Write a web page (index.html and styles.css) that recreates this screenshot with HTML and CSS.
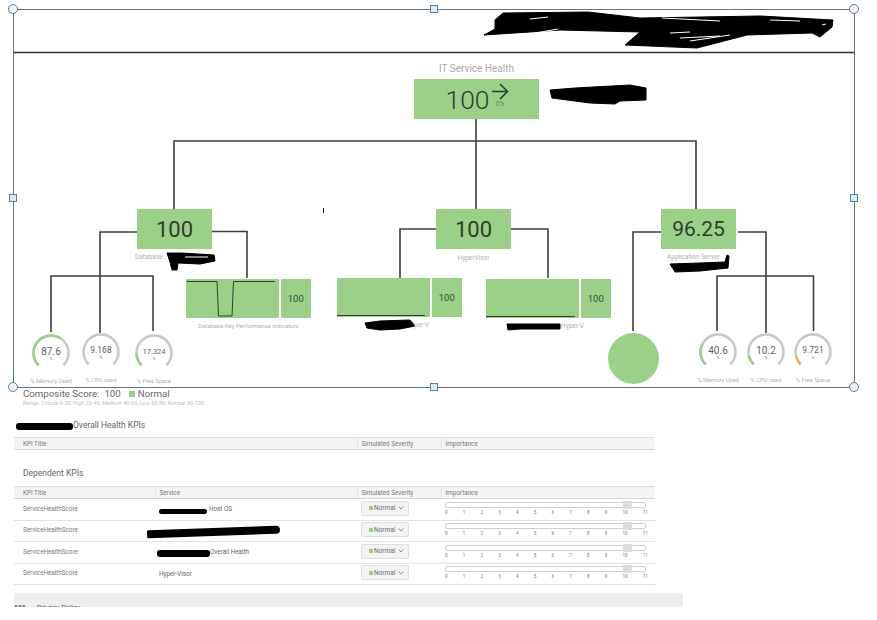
FILE: index.html
```html
<!DOCTYPE html>
<html lang="en">
<head>
<meta charset="utf-8">
<title>IT Service Health</title>
<link rel="stylesheet" href="styles.css">
</head>
<body>
<section class="diagram">
  <svg class="wires" width="877" height="388" viewBox="0 0 877 388">
    <path class="frame" d="M13.5 9.5H854.5V387.5H13.5Z"/>
    <path class="rule" d="M14 52.5H854"/>
    <path class="wire" d="M174 209V141H696V209M476 119V209"/>
    <path class="wire" d="M137 232H100V333M211 231.500H247V278M51 332V276H153V331"/>
    <path class="wire" d="M436 229H400V278M511 229H548V278"/>
    <path class="wire" d="M661 232H633V331M738 232H766V333M717 331V276H813.500V331"/>
    <path class="tick" d="M323.500 208V213"/>
    <g class="scribble">
      <path d="M484 35L495 29 495 20 503 13 588 12 640 18 760 16 833 20 832 27 820 37 812 33 747 35 697 48 625 45 640 32 560 30Z"/>
      <path d="M550 90L575 88 630 85 646 88 646 100 620 101 615 104 590 103 552 98Z"/>
      <path d="M167 253H182L214 255 215 261 200 264 178 263 177 270 172 270 170 262Z"/>
      <path d="M670 264L700 263 725 262 727 255 729 256 728 268 700 271 675 272Z"/>
      <path d="M365 323L380 321 410 320 415 326 400 329 380 330 367 328Z"/>
      <path d="M507 324H560V329H520L508 330Z"/>
    </g>
    <g class="scratch">
      <path d="M530 19L548 17M535 33L558 29M662 18L720 21M770 20L800 21M670 33L690 32M680 38L720 36M690 41L730 35M822 25L826 24"/>
      <path d="M185 257L208 257"/>
    </g>
  </svg>

  <span class="handle corner hc-tl"></span>
  <span class="handle corner hc-tr"></span>
  <span class="handle corner hc-bl"></span>
  <span class="handle corner hc-br"></span>
  <span class="handle square hs-t"></span>
  <span class="handle square hs-l"></span>
  <span class="handle square hs-r"></span>
  <span class="handle square hs-b"></span>

  <div class="root-title">IT Service Health</div>
  <div class="node root">
    <span class="root-value">100</span>
    <span class="trend">
      <svg class="trend-arrow" width="17" height="17" viewBox="0 0 17 17"><path d="M0 8.500H15M8 1L15.500 8.500 8 16"/></svg>
      <span class="trend-pct">0%</span>
    </span>
  </div>

  <div class="node kpi kpi-db">100</div>
  <div class="node kpi kpi-hv">100</div>
  <div class="node kpi kpi-app">96.25</div>
  <div class="caption cap-db">Database</div>
  <div class="caption cap-hv">HyperVisor</div>
  <div class="caption cap-app">Application Server</div>

  <div class="spark spark-db">
    <svg class="spark-plot" width="93" height="39" viewBox="0 0 93 39"><path d="M1 2.500H31L32.500 37H46L47.500 2.500H89"/></svg>
    <span class="spark-value">100</span>
  </div>
  <div class="spark spark-hv1">
    <svg class="spark-plot" width="93" height="39" viewBox="0 0 93 39"><path d="M0 37.500H88"/></svg>
    <span class="spark-value">100</span>
  </div>
  <div class="spark spark-hv2">
    <svg class="spark-plot" width="93" height="39" viewBox="0 0 93 39"><path d="M0 37.500H89"/></svg>
    <span class="spark-value">100</span>
  </div>
  <div class="caption cap-skpi">Database Key Performance indicators</div>
  <div class="caption cap-s1">per-V</div>
  <div class="caption cap-s2">Hyper-V</div>

  <div class="dot"></div>

  <div class="gauge g-1">
    <svg class="dial" width="40" height="40" viewBox="0 0 40 40"><path class="track" d="M7.600 32.400A17.500 17.500 0 1 1 32.400 32.400"/><path class="fill" pathLength="100" stroke-dasharray="62 100" d="M7.600 32.400A17.500 17.500 0 1 1 32.400 32.400"/></svg>
    <span class="g-val big">87.6</span><span class="g-unit">%</span>
    <span class="g-label">% Memory Used</span>
  </div>
  <div class="gauge g-2">
    <svg class="dial" width="40" height="40" viewBox="0 0 40 40"><path class="track" d="M7.600 32.400A17.500 17.500 0 1 1 32.400 32.400"/></svg>
    <span class="g-val">9.168</span><span class="g-unit">%</span>
    <span class="g-label">% CPU used</span>
  </div>
  <div class="gauge g-3">
    <svg class="dial" width="40" height="40" viewBox="0 0 40 40"><path class="track" d="M7.600 32.400A17.500 17.500 0 1 1 32.400 32.400"/><path class="fill" pathLength="100" stroke-dasharray="16 100" d="M7.600 32.400A17.500 17.500 0 1 1 32.400 32.400"/></svg>
    <span class="g-val small">17.324</span><span class="g-unit">%</span>
    <span class="g-label">% Free Space</span>
  </div>
  <div class="gauge g-4">
    <svg class="dial" width="40" height="40" viewBox="0 0 40 40"><path class="track" d="M7.600 32.400A17.500 17.500 0 1 1 32.400 32.400"/><path class="fill" pathLength="100" stroke-dasharray="27 100" d="M7.600 32.400A17.500 17.500 0 1 1 32.400 32.400"/></svg>
    <span class="g-val big">40.6</span><span class="g-unit">%</span>
    <span class="g-label">% Memory Used</span>
  </div>
  <div class="gauge g-5">
    <svg class="dial" width="40" height="40" viewBox="0 0 40 40"><path class="track" d="M7.600 32.400A17.500 17.500 0 1 1 32.400 32.400"/><path class="fill" pathLength="100" stroke-dasharray="12 100" d="M7.600 32.400A17.500 17.500 0 1 1 32.400 32.400"/></svg>
    <span class="g-val big">10.2</span><span class="g-unit">%</span>
    <span class="g-label">% CPU used</span>
  </div>
  <div class="gauge g-6">
    <svg class="dial" width="40" height="40" viewBox="0 0 40 40"><path class="track" d="M7.600 32.400A17.500 17.500 0 1 1 32.400 32.400"/><path class="fill warn" pathLength="100" stroke-dasharray="11 100" d="M7.600 32.400A17.500 17.500 0 1 1 32.400 32.400"/></svg>
    <span class="g-val">9.721</span><span class="g-unit">%</span>
    <span class="g-label">% Free Space</span>
  </div>
</section>

<section class="details">
  <div class="composite">
    <span>Composite Score:</span><span class="score">100</span><span class="swatch"></span><span>Normal</span>
  </div>
  <div class="range">Range: Critical 0-20, High 20-40, Medium 40-60, Low 60-80, Normal 80-100</div>

  <h2 class="section-title overall"><span class="blot blot-overall"></span>Overall Health KPIs</h2>
  <table class="kpis">
    <thead>
      <tr><th class="c-title">KPI Title</th><th class="c-service c-blank"></th><th class="c-sev">Simulated Severity</th><th class="c-imp">Importance</th></tr>
    </thead>
  </table>

  <h2 class="section-title dependent">Dependent KPIs</h2>
  <table class="kpis">
    <thead>
      <tr><th class="c-title">KPI Title</th><th class="c-service">Service</th><th class="c-sev">Simulated Severity</th><th class="c-imp">Importance</th></tr>
    </thead>
    <tbody>
      <tr>
        <td class="kpi-name">ServiceHealthScore</td>
        <td class="svc"><span class="blot blot-a"></span><span class="svc-a">Host OS</span></td>
        <td><button class="sev"><span class="sev-dot"></span>Normal<svg class="chev" width="6" height="4" viewBox="0 0 6 4"><path d="M.5.5L3 3 5.500.5"/></svg></button></td>
        <td>
          <div class="slider"><span class="thumb"></span></div>
          <div class="ticks"><span>0</span><span>1</span><span>2</span><span>3</span><span>4</span><span>5</span><span>6</span><span>7</span><span>8</span><span>9</span><span>10</span><span>11</span></div>
        </td>
      </tr>
      <tr>
        <td class="kpi-name">ServiceHealthScore</td>
        <td class="svc"><span class="blot blot-b"></span></td>
        <td><button class="sev"><span class="sev-dot"></span>Normal<svg class="chev" width="6" height="4" viewBox="0 0 6 4"><path d="M.5.5L3 3 5.500.5"/></svg></button></td>
        <td>
          <div class="slider"><span class="thumb"></span></div>
          <div class="ticks"><span>0</span><span>1</span><span>2</span><span>3</span><span>4</span><span>5</span><span>6</span><span>7</span><span>8</span><span>9</span><span>10</span><span>11</span></div>
        </td>
      </tr>
      <tr>
        <td class="kpi-name">ServiceHealthScore</td>
        <td class="svc"><span class="blot blot-c"></span><span class="svc-c">Overall Health</span></td>
        <td><button class="sev"><span class="sev-dot"></span>Normal<svg class="chev" width="6" height="4" viewBox="0 0 6 4"><path d="M.5.5L3 3 5.500.5"/></svg></button></td>
        <td>
          <div class="slider"><span class="thumb"></span></div>
          <div class="ticks"><span>0</span><span>1</span><span>2</span><span>3</span><span>4</span><span>5</span><span>6</span><span>7</span><span>8</span><span>9</span><span>10</span><span>11</span></div>
        </td>
      </tr>
      <tr>
        <td class="kpi-name">ServiceHealthScore</td>
        <td class="svc">Hyper-Visor</td>
        <td><button class="sev"><span class="sev-dot"></span>Normal<svg class="chev" width="6" height="4" viewBox="0 0 6 4"><path d="M.5.5L3 3 5.500.5"/></svg></button></td>
        <td>
          <div class="slider"><span class="thumb"></span></div>
          <div class="ticks"><span>0</span><span>1</span><span>2</span><span>3</span><span>4</span><span>5</span><span>6</span><span>7</span><span>8</span><span>9</span><span>10</span><span>11</span></div>
        </td>
      </tr>
    </tbody>
  </table>

  <footer class="footer"><span class="foot-a">555</span><span>Privacy Policy</span></footer>
</section>
</body>
</html>
```
FILE: styles.css
```css
* { box-sizing: border-box; }
html, body { margin: 0; padding: 0; background: #fff; }
body { width: 877px; height: 620px; overflow: hidden; font-family: Roboto, "Liberation Sans", sans-serif; color: #666; }

/* free canvas: diagram nodes */
.diagram { position: relative; width: 877px; height: 388px; }
.wires { position: absolute; left: 0; top: 0; }
.wires path { fill: none; }
.wires .frame { stroke: #5f7787; stroke-width: 1; }
.wires .rule { stroke: #2e2e2e; stroke-width: 1.5; }
.wires .wire { stroke: #3f3f3f; stroke-width: 1.6; }
.wires .tick { stroke: #222; stroke-width: 1; }
.wires .scribble path { fill: #000; stroke: #000; stroke-width: 1; stroke-linejoin: round; }
.wires .scratch path { stroke: #fff; stroke-width: 1; }

.handle { position: absolute; border: 1px solid #5f7f96; }
.corner { width: 10px; height: 10px; border-radius: 50%; background: #eef5f9; }
.square { width: 8px; height: 8px; background: #d6edf8; }
.hc-tl { left: 8px; top: 4px; }
.hc-tr { left: 849px; top: 4px; }
.hc-bl { left: 8px; top: 382px; }
.hc-br { left: 849px; top: 382px; }
.hs-t { left: 430px; top: 5px; }
.hs-b { left: 430px; top: 383px; }
.hs-l { left: 9px; top: 194px; }
.hs-r { left: 850px; top: 194px; }

.root-title { position: absolute; left: 414px; top: 62px; width: 125px; text-align: center; font-size: 10px; line-height: 13px; color: #a9a9a9; }
.node { position: absolute; background: #9ad088; color: #29352a; display: flex; align-items: center; justify-content: center; }
.root { left: 414px; top: 79px; width: 125px; height: 40px; font-size: 26.500px; font-weight: 300; color: #2f3d31; }
.root-value { margin-left: 1px; }
.trend { display: flex; flex-direction: column; align-items: center; margin: -7px 0 0 2px; width: 17px; }
.trend-arrow { display: block; }
.trend-arrow path { fill: none; stroke: #2a3a2c; stroke-width: 1.500; }
.trend-pct { font-size: 6.500px; line-height: 7px; margin-top: 1px; color: #3d6a42; }
.kpi { font-size: 22px; color: #2f3d31; }
.kpi-db { left: 137px; top: 209px; width: 75px; height: 40px; }
.kpi-hv { left: 436px; top: 209px; width: 75px; height: 40px; }
.kpi-app { left: 661px; top: 209px; width: 75px; height: 40px; font-size: 21px; }

.caption { position: absolute; font-size: 6.500px; line-height: 8px; color: #b0b0b0; white-space: nowrap; }
.cap-db { left: 135px; top: 253px; }
.cap-hv { left: 436px; top: 254px; width: 75px; text-align: center; }
.cap-app { left: 667px; top: 253px; }
.cap-skpi { left: 198px; top: 322px; font-size: 6px; }
.cap-s1 { left: 414px; top: 321px; }
.cap-s2 { left: 561px; top: 322px; }

.spark { position: absolute; width: 125px; height: 39px; display: flex; gap: 1.500px; }
.spark-plot { width: 93px; height: 39px; background: #9ad088; display: block; flex: none; }
.spark-plot path { fill: none; stroke: #2f3f31; stroke-width: 1; }
.spark-value { flex: 1; background: #9ad088; display: flex; align-items: center; justify-content: center; font-size: 9.500px; color: #3c4a3d; }
.spark-db { left: 186px; top: 279px; }
.spark-hv1 { left: 337px; top: 278px; }
.spark-hv2 { left: 486px; top: 279px; }

.dot { position: absolute; left: 608px; top: 333px; width: 51px; height: 51px; border-radius: 50%; background: #9ad088; }

.gauge { position: absolute; width: 60px; height: 52px; }
.dial { position: absolute; left: 10px; top: 0; }
.dial path { fill: none; stroke-width: 2.500; }
.dial .track { stroke: #c8c8c8; }
.dial .fill { stroke: #9ad088; }
.dial .warn { stroke: #eeb24f; }
.g-val { position: absolute; left: 0; top: 13px; width: 60px; text-align: center; font-size: 8.500px; line-height: 11px; color: #5e5e5e; }
.g-val.big { font-size: 10px; }
.g-val.small { font-size: 7.500px; }
.g-unit { position: absolute; left: 0; top: 24px; width: 60px; text-align: center; font-size: 4px; line-height: 4px; color: #888; }
.g-label { position: absolute; left: -5px; top: 44px; width: 70px; text-align: center; font-size: 5.800px; line-height: 8px; color: #b0b0b0; white-space: nowrap; }
.g-1 { left: 21px; top: 333px; }
.g-2 { left: 71px; top: 332px; }
.g-3 { left: 124px; top: 333px; }
.g-4 { left: 688px; top: 332px; }
.g-5 { left: 736px; top: 332px; }
.g-6 { left: 783px; top: 332px; }

/* page flow below */
.details { width: 669px; margin-left: 14px; position: relative; }
.composite { display: flex; align-items: center; padding-left: 9px; font-size: 9.700px; line-height: 12px; color: #666; }
.score { margin-left: 5px; }
.swatch { width: 6px; height: 6px; background: #9ad088; margin: 0 3px 0 8px; }
.range { padding-left: 9px; font-size: 5.500px; line-height: 6px; color: #bdbdbd; }
.section-title { margin: 0; font-weight: 400; font-size: 8.500px; line-height: 12px; color: #666; }
.overall { margin-top: 13px; padding-left: 59px; position: relative; }
.dependent { margin-top: 17px; padding-left: 9px; }

.kpis { width: 641px; border-collapse: collapse; table-layout: fixed; font-size: 6.300px; color: #666; }
.overall + .kpis { margin-top: 6px; }
.dependent + .kpis { margin-top: 7px; }
.kpis th { height: 12px; padding: 0 0 0 9px; background: #f4f4f4; border-top: 1px solid #dcdcdc; border-bottom: 1px solid #d6d6d6; border-left: 1px solid #e4e4e4; font-weight: 400; text-align: left; color: #777; }
.kpis th:first-child { border-left: 0; }
.kpis th.c-blank { border-left: 0; }
.c-title { width: 141px; }
.c-service { width: 202px; }
.c-sev { width: 84px; }
.c-imp { width: 214px; padding-left: 4px; }
.kpis th.c-sev { padding-left: 4px; }
.kpis th.c-service { padding-left: 4px; }
.kpis th.c-imp { padding-left: 4px; }
.kpis td { height: 21.500px; padding: 0 0 2px 4px; border-bottom: 1px solid #e2e2e2; vertical-align: middle; }
.kpis td.kpi-name { padding: 0 0 1px 9px; color: #777; }
.kpis td.svc { position: relative; padding-bottom: 0; }
.svc-a { margin-left: 50px; }
.svc-c { margin-left: 51px; }

.blot { position: absolute; display: block; background: #000; border-radius: 3px; }
.blot-overall { left: 2px; top: 4px; width: 57px; height: 7px; }
.blot-a { left: 4px; top: 10px; width: 48px; height: 5px; }
.blot-b { left: -8px; top: 7px; width: 133px; height: 8px; border-radius: 2px 6px 6px 2px; transform: rotate(-2deg); }
.blot-c { left: 2px; top: 8px; width: 53px; height: 7px; }

.sev { display: flex; align-items: center; width: 48px; height: 15px; padding: 0 0 0 7px; border: 1px solid #dedede; border-radius: 2px; background: #f3f3f3; font: inherit; font-size: 6.500px; color: #6d6d6d; }
.sev-dot { width: 4px; height: 4px; margin-right: 1px; background: #9ad088; }
.chev { margin-left: 3px; }
.chev path { fill: none; stroke: #777; stroke-width: .8; }

.slider { position: relative; width: 201px; height: 6px; margin-left: 0; border: 1px solid #cfcfcf; border-radius: 2px; background: #fff; }
.thumb { position: absolute; left: 177px; top: -2px; width: 9px; height: 8px; background: #dcdcdc; border-radius: 1px; }
.ticks { display: flex; justify-content: space-between; width: 203px; margin-top: 2px; font-size: 4.500px; line-height: 5px; color: #777; }

.footer { height: 14px; margin-top: 8px; padding: 11px 0 0 0; overflow: hidden; background: #eeeeee; font-size: 7px; line-height: 8px; color: #555; }
.foot-a { margin-right: 11px; }
```
